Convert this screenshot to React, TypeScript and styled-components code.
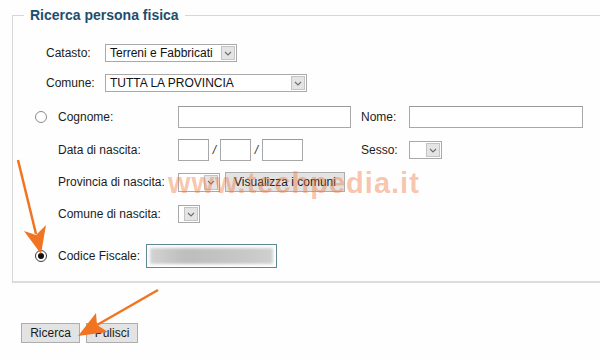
import styled, { createGlobalStyle } from "styled-components";

const GlobalStyle = createGlobalStyle`
    html, body {
        margin: 0;
        padding: 0;
        background: #fefefe;
        overflow: hidden;
    }
    body {
        font-family: "Liberation Sans", Arial, sans-serif;
        font-size: 12px;
        color: #1c1c1c;
    }
`;

const Page = styled.div`
    position: relative;
    width: 600px;
    height: 360px;
    overflow: hidden;
    box-sizing: border-box;
    padding: 7px 0 0 12px;
`;

const Panel = styled.fieldset`
    margin: 0;
    width: 620px;
    box-sizing: border-box;
    border: 1px solid #d6d6d6;
    border-bottom: 2px solid #dcdcdc;
    padding: 15px 0 9px 0;
    min-width: 0;
`;

const Legend = styled.legend`
    margin-left: 11px;
    padding: 0 6px;
    font-size: 14px;
    line-height: 16px;
    font-weight: bold;
    color: #1d4d6e;
`;

const Row = styled.div<{ $h: number; $indent?: number; $top?: number }>`
    display: flex;
    align-items: center;
    height: ${(p) => p.$h}px;
    padding-left: ${(p) => p.$indent ?? 0}px;
    margin-top: ${(p) => p.$top ?? 0}px;
`;

const Label = styled.span<{ $w?: number }>`
    flex: none;
    width: ${(p) => (p.$w ? `${p.$w}px` : "auto")};
    white-space: nowrap;
`;

const RadioCell = styled.div`
    flex: none;
    width: 45px;
    display: flex;
    align-items: center;
`;

const Radio = styled.span<{ $on?: boolean }>`
    margin-left: 22px;
    width: 12px;
    height: 12px;
    box-sizing: border-box;
    border-radius: 50%;
    border: 1px solid ${(p) => (p.$on ? "#3a3a3a" : "#8a8a8a")};
    background: #fff;
    display: flex;
    align-items: center;
    justify-content: center;

    &::after {
        content: "";
        display: ${(p) => (p.$on ? "block" : "none")};
        width: 6px;
        height: 6px;
        border-radius: 50%;
        background: #111;
    }
`;

const FieldCell = styled.div<{ $w?: number }>`
    flex: none;
    width: ${(p) => (p.$w ? `${p.$w}px` : "auto")};
    display: flex;
    align-items: center;
`;

const TextBox = styled.input<{ $w: number; $h: number }>`
    width: ${(p) => p.$w}px;
    height: ${(p) => p.$h}px;
    box-sizing: border-box;
    margin: 0;
    padding: 0 3px;
    border: 1px solid #a8a8a8;
    border-top-color: #999;
    background: #fff;
    font: inherit;
    outline: none;
`;

const Slash = styled.span`
    width: 11px;
    text-align: center;
    font-style: italic;
    font-size: 12px;
    color: #333;
`;

const SelectBox = styled.div<{ $w: number; $h: number }>`
    display: flex;
    width: ${(p) => p.$w}px;
    height: ${(p) => p.$h}px;
    box-sizing: border-box;
    border: 1px solid #a9a9a9;
    background: #fff;
`;

const SelectText = styled.span`
    flex: 1;
    padding-left: 4px;
    display: flex;
    align-items: center;
    white-space: nowrap;
    overflow: hidden;
    font-size: 12px;
    color: #111;
`;

const SelectArrow = styled.span`
    flex: none;
    width: 14px;
    margin: 1px;
    box-sizing: border-box;
    border: 1px solid #c4c4c4;
    background: #e4e4e4;
    display: flex;
    align-items: center;
    justify-content: center;
`;

const Button = styled.button<{ $w: number }>`
    width: ${(p) => p.$w}px;
    height: 20px;
    margin: 0;
    padding: 0;
    box-sizing: border-box;
    border: 1px solid #adadad;
    background: #e3e3e3;
    font-family: "Liberation Sans", Arial, sans-serif;
    font-size: 12px;
    color: #1a1a1a;
`;

const ButtonBar = styled.div`
    display: flex;
    gap: 6px;
    margin-top: 40px;
    padding-left: 9px;
`;

const FiscalBox = styled.div`
    width: 131px;
    height: 24px;
    box-sizing: border-box;
    border: 1px solid #5f8791;
    background: #fff;
    padding: 3px;
    overflow: hidden;
`;

const Blurred = styled.div`
    height: 100%;
    background: linear-gradient(90deg, #d2d2d2, #bdbdbd 30%, #c6c6c6 70%, #cfcfcf);
    filter: blur(1.5px);
`;

const Watermark = styled.div`
    position: absolute;
    left: 168px;
    top: 167px;
    font-family: "Liberation Sans", Arial, sans-serif;
    font-weight: bold;
    font-size: 29px;
    letter-spacing: 1px;
    color: rgba(240, 118, 58, 0.42);
    pointer-events: none;
    white-space: nowrap;
`;

const Overlay = styled.svg`
    position: absolute;
    left: 0;
    top: 0;
    pointer-events: none;
`;

function Chevron() {
    return (
        <svg width="8" height="5" viewBox="0 0 8 5">
            <polyline points="1,1 4,4 7,1" fill="none" stroke="#6e6e6e" strokeWidth="1.1" />
        </svg>
    );
}

function Select({ w, h, text }: { w: number; h: number; text?: string }) {
    return (
        <SelectBox $w={w} $h={h}>
            <SelectText>{text}</SelectText>
            <SelectArrow>
                <Chevron />
            </SelectArrow>
        </SelectBox>
    );
}

function App() {
    return (
        <Page>
            <GlobalStyle />
            <Panel>
                <Legend>Ricerca persona fisica</Legend>
                <Row $h={30} $indent={33}>
                    <Label $w={59}>Catasto:</Label>
                    <Select w={132} h={18} text="Terreni e Fabbricati" />
                </Row>
                <Row $h={30} $indent={33}>
                    <Label $w={59}>Comune:</Label>
                    <Select w={202} h={18} text="TUTTA LA PROVINCIA" />
                </Row>
                <Row $h={38}>
                    <RadioCell>
                        <Radio />
                    </RadioCell>
                    <Label $w={120}>Cognome:</Label>
                    <FieldCell $w={183}>
                        <TextBox $w={173} $h={22} />
                    </FieldCell>
                    <Label $w={48}>Nome:</Label>
                    <TextBox $w={174} $h={22} />
                </Row>
                <Row $h={28}>
                    <RadioCell />
                    <Label $w={120}>Data di nascita:</Label>
                    <FieldCell $w={183}>
                        <TextBox $w={31} $h={22} />
                        <Slash>/</Slash>
                        <TextBox $w={31} $h={22} />
                        <Slash>/</Slash>
                        <TextBox $w={41} $h={22} />
                    </FieldCell>
                    <Label $w={48}>Sesso:</Label>
                    <Select w={33} h={18} />
                </Row>
                <Row $h={36}>
                    <RadioCell />
                    <Label $w={120}>Provincia di nascita:</Label>
                    <FieldCell>
                        <Select w={42} h={19} />
                        <Button $w={120} style={{ marginLeft: 5 }}>Visualizza i comuni</Button>
                    </FieldCell>
                </Row>
                <Row $h={28}>
                    <RadioCell />
                    <Label $w={120}>Comune di nascita:</Label>
                    <Select w={22} h={18} />
                </Row>
                <Row $h={32} $top={12}>
                    <RadioCell>
                        <Radio $on />
                    </RadioCell>
                    <Label $w={88}>Codice Fiscale:</Label>
                    <FiscalBox>
                        <Blurred />
                    </FiscalBox>
                </Row>
            </Panel>
            <ButtonBar>
                <Button $w={59}>Ricerca</Button>
                <Button $w={52}>Pulisci</Button>
            </ButtonBar>
            <Watermark>www.techpedia.it</Watermark>
            <Overlay width="600" height="360" viewBox="0 0 600 360">
                <line x1="18" y1="160" x2="36" y2="234" stroke="#f07422" strokeWidth="2.5" />
                <polygon points="41,254 24,231 36,235 46,225" fill="#f07422" />
                <line x1="158" y1="290" x2="97" y2="325" stroke="#f07422" strokeWidth="2.5" />
                <polygon points="78,336 96,313 97,325 108,332" fill="#f07422" />
            </Overlay>
        </Page>
    );
}

export default App;
